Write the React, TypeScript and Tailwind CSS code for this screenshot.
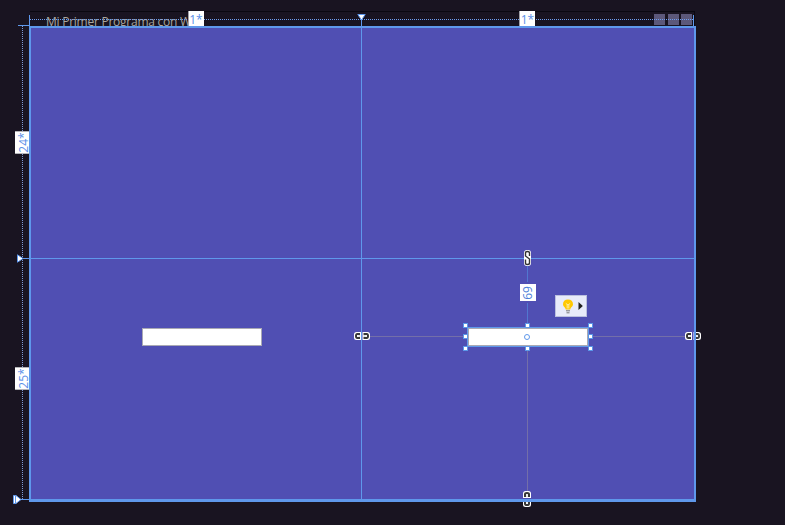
import React from 'react';

const FONT = "font-['Open_Sans','Noto_Sans',sans-serif]";

function Handle({ className = '' }: { className?: string }) {
  return <span className={`h-[5px] w-[5px] border border-[#5b97e8] bg-white ${className}`} />;
}

function ColumnSize() {
  return (
    <span className="flex h-[15px] w-4 items-center justify-center border-l border-[#a0a0a8] bg-white pt-[2px] text-[12px] leading-none text-[#5b8fe8]">
      1*
    </span>
  );
}

function RowSize({ label }: { label: string }) {
  return (
    <span className="flex h-[23px] w-[14px] items-center justify-center border-y border-[#b4b4b8] bg-white">
      <span className="-rotate-90 pt-[3px] text-[12px] leading-none whitespace-nowrap text-[#5b8fe8]">{label}</span>
    </span>
  );
}

// An anchor link whose halves sit on both sides of a grid line.
function ChainLink({ lineX, lineWidth, className }: { lineX: number; lineWidth: number; className: string }) {
  return (
    <svg className={`shrink-0 ${className}`} width="16" height="8" viewBox="0 0 16 8" fill="none">
      <path d="M2.5 0H7V8H2.5Q0 8 0 5.5V2.5Q0 0 2.5 0ZM8.5 0H13.5Q16 0 16 2.5V5.5Q16 8 13.5 8H8.5Z" fill="white" />
      <path d="M6 2H3.3Q2 2 2 4T3.3 6H6M9.5 2H12.7Q14 2 14 4T12.7 6H9.5" stroke="#383838" strokeWidth="2" />
      <path d="M4.5 4H6M9.5 4H11.5" stroke="#bbb" />
      <rect x={lineX} y="-1" width={lineWidth} height="10" fill="#5f98eb" />
    </svg>
  );
}

function SelectedTextBox() {
  return (
    <div className="grid h-7 w-[130px] shrink-0">
      <div className="col-start-1 row-start-1 m-[4px] border border-[#5f98eb] bg-white">
        <div className="h-full border border-[#a9a9b4]" />
      </div>
      <div className="col-start-1 row-start-1 flex flex-col justify-between">
        <div className="flex justify-between"><Handle /><Handle className="-ml-px" /><Handle /></div>
        <div className="-mt-px flex items-center justify-between">
          <Handle />
          <i className="-ml-[2px] h-[6px] w-[6px] rounded-full border border-[#5f98eb]" />
          <Handle />
        </div>
        <div className="flex justify-between"><Handle /><Handle className="-ml-px" /><Handle /></div>
      </div>
    </div>
  );
}

function TopRuler() {
  return (
    <div className="mt-[4px] flex h-[11px] border-x border-[#5f98eb]">
      <div className="-mt-[4px] grid h-[15px] w-full grid-cols-[332px_330px] bg-[repeating-linear-gradient(90deg,#6d9df0_0_1px,transparent_1px_2px)] bg-[length:100%_1px] bg-[position:0_8px] bg-no-repeat">
        <div className="grid">
          <div className="col-start-1 row-start-1 flex justify-center pr-px"><ColumnSize /></div>
          <svg className="col-start-1 row-start-1 mt-[3px] -mr-1 justify-self-end" width="9" height="12">
            <path d="M4.5 5V12" stroke="#5f98eb" />
            <path d="M.8.5H8.2L4.5 6Z" fill="white" stroke="#5f98eb" />
          </svg>
        </div>
        <div className="flex justify-center"><ColumnSize /></div>
      </div>
    </div>
  );
}

function LeftRuler() {
  return (
    <div className="grid h-[476px] grid-rows-[232px_1fr] bg-[repeating-linear-gradient(180deg,#7f9bd5_0_1px,transparent_1px_2px)] bg-[length:1px_473px] bg-[position:22px_0] bg-no-repeat">
      <div className="grid">
        <div className="col-start-1 row-start-1 flex items-center justify-end"><RowSize label="24*" /></div>
        <svg className="col-start-1 row-start-1 ml-[17px] -mb-[5px] self-end" width="12" height="9">
          <path d="M5 4.5H12" stroke="#5f98eb" />
          <path d="M.5.8V8.2L6 4.5Z" fill="white" stroke="#5f98eb" />
        </svg>
      </div>
      <div className="grid">
        <div className="col-start-1 row-start-1 flex items-center justify-end pb-[3px]"><RowSize label="25*" /></div>
        <svg className="col-start-1 row-start-1 ml-[13px] -mb-[2px] self-end" width="16" height="9">
          <path d="M7 4.5H16" stroke="#5f98eb" />
          <path d="M.5.5V8.5H3L8 4.5L3 .5Z" fill="white" stroke="#5f98eb" />
          <path d="M2.5 1V8" stroke="#5f98eb" />
        </svg>
      </div>
    </div>
  );
}

export default function App() {
  return (
    <div className={`h-[525px] w-[785px] overflow-hidden bg-[#191421] pt-[11px] ${FONT}`}>
      <div className="grid grid-cols-[29px_667px] grid-rows-[15px_476px]">
        <div className="flex items-end justify-end">
          <i className="h-px w-[11px] bg-[#5f98eb]" />
        </div>

        <header className="grid">
          <div className="col-start-1 row-start-1 mr-px ml-px flex h-[15px] justify-between overflow-hidden border-t border-r border-[#0a0810] pt-[2px] pr-[2px] pl-4">
            <span className="w-[150px] text-[12px] leading-[16px] tracking-[-0.25px] whitespace-nowrap text-[#aaa69f]">
              Mi Primer Programa con W
            </span>
            <div className="flex">
              <i className="h-[11px] w-[11px] bg-[#5c587a]" />
              <i className="ml-[3px] h-[11px] w-[11px] bg-[#5c587a]" />
              <i className="ml-[2px] h-[11px] w-[11px] bg-[#5c587a]" />
            </div>
          </div>
          <div className="col-start-1 row-start-1 mr-[2px]">
            <TopRuler />
          </div>
        </header>

        <LeftRuler />

        <main className="grid h-[476px] grid-cols-[331px_332px] grid-rows-[231px_240px] border-2 border-b-3 border-[#5f98eb] bg-[#504fb3]">
          <div className="border-r border-b border-[#5f98eb]" />
          <div className="border-b border-[#5f98eb]" />
          <div className="border-r border-[#5f98eb] pt-[69px] pl-[111px]">
            <div className="h-[18px] w-[120px] border border-[#a9a9b4] bg-white" />
          </div>

          <div className="relative grid">
            {/* vertical margins */}
            <div className="col-start-1 row-start-1 -mt-[9px] ml-[158px] flex w-4 flex-col items-center justify-self-start">
              <svg className="mr-px shrink-0" width="9" height="16" viewBox="0 0 9 16" fill="none">
                <rect x="1" y="0" width="7" height="16" rx="3" fill="white" />
                <path d="M6.5 6V3Q6.5 1.5 4.5 1.5T2.5 3V6L6.5 9V13Q6.5 14.5 4.5 14.5T2.5 13V9.5" stroke="#333" strokeWidth="1.4" />
              </svg>
              <i className="mr-px h-4 w-px bg-[#5177d0]" />
              <span className="mt-[2px] flex h-[17px] w-4 items-center justify-center bg-white">
                <span className="-rotate-90 text-[12px] leading-none text-[#4d80d8]">69</span>
              </span>
              <i className="mt-[2px] mr-px h-[22px] w-px bg-[#5177d0]" />
              <i className="mt-[25px] mr-px h-[141px] w-px bg-[#736fa9]" />
              <span className="mr-[2px] flex h-4 w-2 items-center justify-center">
                <ChainLink lineX={8} lineWidth={3} className="rotate-90 overflow-visible" />
              </span>
            </div>

            {/* horizontal margins and the control between them */}
            <div className="col-start-1 row-start-1 mt-[64px] -ml-2 flex h-7 w-[347px] items-start">
              <ChainLink lineX={7} lineWidth={1} className="mt-[9px] overflow-visible" />
              <i className="mt-[13px] h-px w-[93px] bg-[#736fa9]" />
              <SelectedTextBox />
              <i className="mt-[13px] h-px w-[92px] bg-[#736fa9]" />
              <ChainLink lineX={9} lineWidth={2} className="mt-[9px] overflow-visible" />
            </div>

            <button className="absolute top-[36px] left-[193px] flex h-[22px] w-8 items-center border border-[#bbc0df] bg-[#e8ebfa] pl-[6px]">
              <svg width="12" height="15" viewBox="0 0 12 15">
                <path d="M6 .5C2.8.5 1 2.6 1 5.2C1 7.8 3.7 8.3 3.7 10.5H8.3C8.3 8.3 11 7.8 11 5.2C11 2.6 9.2.5 6 .5Z" fill="#ffc800" />
                <path d="M3.8 4.3L5.2 5.5V9.5M8.2 4.3L6.8 5.5V9.5M5.2 5.5H6.8" fill="none" stroke="#fff0b0" strokeWidth=".9" />
                <path d="M4 11.8H8M4.5 13.8H7.5" stroke="#777" />
              </svg>
              <svg className="ml-[4px]" width="5" height="8"><path d="M.5 0V8L4.8 4Z" fill="#222" /></svg>
            </button>
          </div>
        </main>
      </div>
    </div>
  );
}
